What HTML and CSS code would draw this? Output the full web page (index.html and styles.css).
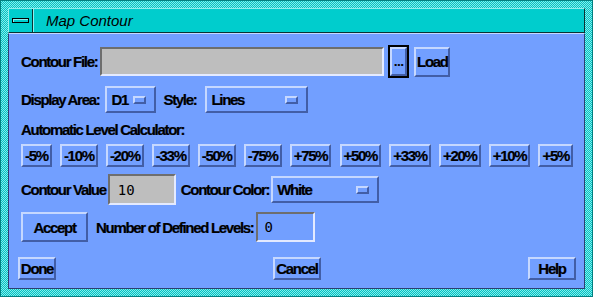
FILE: index.html
```html
<!DOCTYPE html>
<html lang="en">

<head>
    <meta charset="UTF-8">
    <title>Map Contour</title>
    <link rel="stylesheet" href="styles.css">
</head>

<body>
    <div class="window">
        <div class="titlebar">
            <div class="menu-btn"><span class="menu-bar"></span></div>
            <div class="title">Map Contour</div>
        </div>
        <div class="dialog">
            <div class="row r1">
                <span class="label">Contour File:</span>
                <div class="field field-file"></div>
                <div class="focus"><button class="btn btn-dots">...</button></div>
                <button class="btn btn-load">Load</button>
            </div>
            <div class="row r2">
                <span class="label">Display Area:</span>
                <div class="option opt-area">D1<span class="indicator"></span></div>
                <span class="label lbl-style">Style:</span>
                <div class="option opt-style">Lines<span class="indicator"></span></div>
            </div>
            <div class="row r3">
                <span class="label">Automatic Level Calculator:</span>
            </div>
            <div class="row r4">
                <button class="btn pct">-5%</button>
                <button class="btn pct">-10%</button>
                <button class="btn pct">-20%</button>
                <button class="btn pct">-33%</button>
                <button class="btn pct">-50%</button>
                <button class="btn pct">-75%</button>
                <button class="btn pct">+75%</button>
                <button class="btn pct">+50%</button>
                <button class="btn pct">+33%</button>
                <button class="btn pct">+20%</button>
                <button class="btn pct">+10%</button>
                <button class="btn pct">+5%</button>
            </div>
            <div class="row r5">
                <span class="label">Contour Value</span>
                <div class="field field-value">10</div>
                <span class="label lbl-color">Contour Color:</span>
                <div class="option opt-color">White<span class="indicator"></span></div>
            </div>
            <div class="row r6">
                <button class="btn btn-accept">Accept</button>
                <span class="label lbl-levels">Number of Defined Levels:</span>
                <div class="field field-levels">0</div>
            </div>
            <div class="actions">
                <button class="btn act act-done">Done</button>
                <button class="btn act act-cancel">Cancel</button>
                <button class="btn act act-help">Help</button>
            </div>
        </div>
    </div>
</body>

</html>
```

FILE: styles.css
```css
body {
    margin: 0;
    background-color: #00cdcd;
    font-family: "Liberation Sans", Arial, sans-serif;
    color: #000;
}

.window {
    width: 593px;
    height: 297px;
    box-sizing: border-box;
    padding: 7px 7px 7px 7px;
    display: flex;
    flex-direction: column;
    background: repeating-conic-gradient(#00c4c4 0 25%, #86eaea 0 50%) 0 0 / 2px 2px;
    border: 1px solid #008080;
}

.titlebar {
    height: 23px;
    display: flex;
    align-items: center;
    background-color: #00cdcd;
    border-top: 1px solid #8ff0f0;
    border-left: 1px solid #8ff0f0;
    border-bottom: 1px solid #0a3333;
    border-right: 1px solid #0a3333;
}

.menu-btn {
    width: 23px;
    height: 23px;
    display: flex;
    align-items: center;
    justify-content: center;
    border-right: 1px solid #0a3333;
    box-shadow: 1px 0 0 #8ff0f0;
}

.menu-bar {
    width: 15px;
    height: 3px;
    border: 1px solid #000;
    background-color: #00cdcd;
    box-shadow: inset 1px 1px 0 #8ff0f0;
}

.title {
    margin-left: 13px;
    font-size: 15px;
    font-style: italic;
}

.dialog {
    flex: 1;
    background-color: #729fff;
    border-top: 1px solid #c6d8ff;
    border-left: 1px solid #2c3f70;
    border-right: 1px solid #2c3f70;
    border-bottom: 1px solid #2c3f70;
    padding: 11px 8px 0 12px;
}

.row {
    display: flex;
    align-items: center;
}

.label,
.btn,
.option {
    font-family: "Liberation Sans", Arial, sans-serif;
    font-size: 15px;
    font-weight: bold;
    letter-spacing: -1.3px;
    -webkit-text-stroke: 0.2px #000;
    white-space: nowrap;
}

.btn {
    color: #000;
    background-color: #729fff;
    border: 2px solid;
    border-color: #c6d8ff #425ea6 #425ea6 #c6d8ff;
    padding: 0 2px;
    margin: 0;
    box-sizing: border-box;
}

.field {
    box-sizing: border-box;
    border: 2px solid;
    border-color: #6e6e6e #e4eaff #e4eaff #6e6e6e;
    font-family: "DejaVu Sans Mono", monospace;
    font-size: 14px;
    display: flex;
    align-items: center;
}

.option {
    box-sizing: border-box;
    display: flex;
    align-items: center;
    justify-content: space-between;
    border: 2px solid;
    border-color: #c6d8ff #425ea6 #425ea6 #c6d8ff;
    padding: 0 8px 0 4px;
    height: 27px;
}

.indicator {
    width: 13px;
    height: 8px;
    box-sizing: border-box;
    border: 2px solid;
    border-color: #c6d8ff #425ea6 #425ea6 #c6d8ff;
}

.r1 {
    height: 33px;
}

.field-file {
    width: 284px;
    height: 29px;
    margin-left: 3px;
    background-color: #bebebe;
}

.focus {
    margin-left: 4px;
    width: 21px;
    height: 33px;
    box-sizing: border-box;
    border: 2px solid #000;
    display: flex;
}

.btn-dots {
    flex: 1;
    padding: 0;
    font-size: 12px;
    letter-spacing: 0;
}

.btn-load {
    margin-left: 5px;
    width: 36px;
    height: 30px;
    padding: 0;
}

.r2 {
    height: 27px;
    margin-top: 8px;
}

.opt-area {
    width: 51px;
    margin-left: 6px;
}

.lbl-style {
    margin-left: 7px;
}

.opt-style {
    width: 103px;
    margin-left: 9px;
}

.r3 {
    height: 22px;
    margin-top: 5px;
}

.r4 {
    height: 23px;
    margin: 4px 3px 0 0;
    justify-content: space-between;
}

.pct {
    height: 23px;
}

.r5 {
    height: 31px;
    margin-top: 7px;
}

.field-value {
    width: 68px;
    height: 31px;
    margin-left: 2px;
    padding-left: 8px;
    background-color: #bebebe;
}

.lbl-color {
    margin-left: 5px;
}

.opt-color {
    width: 108px;
    margin-left: 2px;
}

.r6 {
    height: 30px;
    margin-top: 7px;
}

.btn-accept {
    width: 67px;
    height: 30px;
}

.lbl-levels {
    margin-left: 8px;
}

.field-levels {
    width: 59px;
    height: 30px;
    margin-left: 2px;
    padding-left: 7px;
}

.actions {
    display: grid;
    grid-template-columns: 1fr auto 1fr;
    margin: 15px 0 0 -3px;
}

.act {
    height: 23px;
    padding: 0;
}

.act-done {
    justify-self: start;
    width: 38px;
}

.act-cancel {
    width: 48px;
}

.act-help {
    justify-self: end;
    width: 48px;
}
```
